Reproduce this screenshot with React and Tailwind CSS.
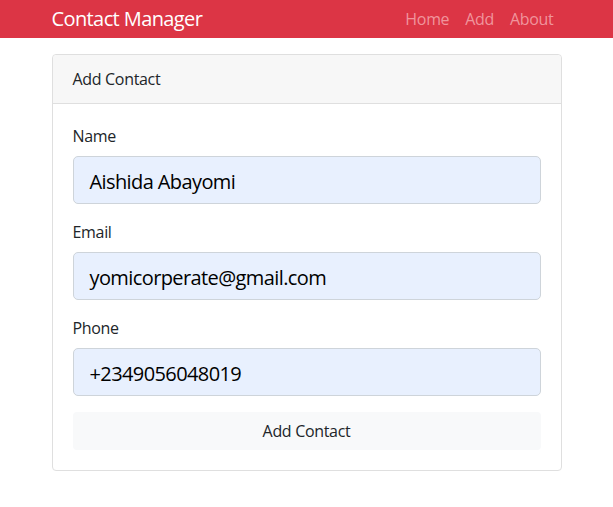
import React from "react";

const font = { fontFamily: '"Open Sans", "Noto Sans", sans-serif' };

function Field({ label, value }) {
  return (
    <div className="mb-4">
      <label className="block text-[16px] leading-6 text-[#212529] mb-2">{label}</label>
      <div className="h-12 flex items-center px-4 pt-[3px] bg-[#e8f0fe] border border-[#ced4da] rounded-[5px] text-[20px] tracking-[-0.03em] text-black">
        {value}
      </div>
    </div>
  );
}

export default function App() {
  return (
    <div className="min-h-screen bg-white tracking-[-0.02em]" style={font}>
      {/* Navbar */}
      <nav className="h-[38px] bg-[#dc3545]">
        <div className="max-w-[540px] mx-auto px-[15px] h-full flex items-center justify-between">
          <a className="text-white text-[20px] leading-[30px] tracking-[-0.03em]">Contact Manager</a>
          <ul className="flex items-center text-[16px] text-[#f0949c]">
            <li className="px-2">Home</li>
            <li className="px-2">Add</li>
            <li className="px-2">About</li>
          </ul>
        </div>
      </nav>

      {/* Card */}
      <div className="max-w-[540px] mx-auto px-[15px] pt-4">
        <div className="border border-[#dfdfdf] rounded-[4px] bg-white">
          <div className="px-5 py-3 bg-[#f7f7f7] border-b border-[#dfdfdf] text-[16px] leading-6 text-[#212529] rounded-t-[4px]">
            Add Contact
          </div>
          <div className="p-5">
            <Field label="Name" value="Aishida Abayomi" />
            <Field label="Email" value="yomicorperate@gmail.com" />
            <Field label="Phone" value="+2349056048019" />
            <button className="w-full h-[38px] bg-[#f8f9fa] rounded-[4px] text-[16px] text-[#212529]">
              Add Contact
            </button>
          </div>
        </div>
      </div>
    </div>
  );
}
